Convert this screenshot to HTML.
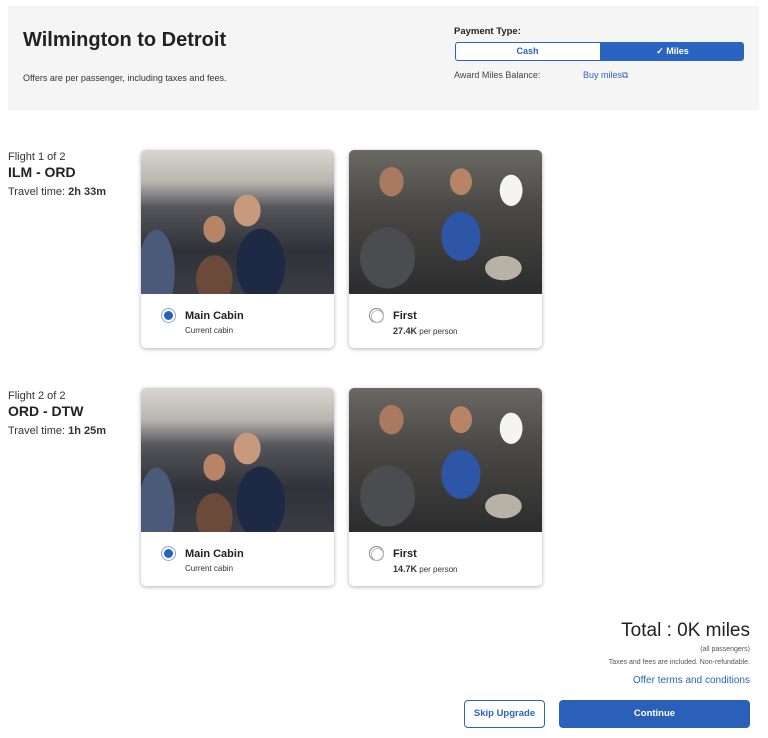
<!DOCTYPE html>
<html><head><meta charset="utf-8"><style>
*{box-sizing:border-box;margin:0;padding:0}
body{width:768px;height:738px;background:#fff;font-family:"Liberation Sans",sans-serif;color:#222;position:relative;overflow:hidden}
.hdr{position:absolute;left:8px;top:6px;width:751px;height:104px;background:#f5f5f6}
.abs{position:absolute}
.card{position:absolute;width:193px;height:198px;background:#fff;border-radius:5px;box-shadow:0 1px 4px rgba(0,0,0,.3);overflow:hidden}
.img{position:absolute;left:0;top:0;width:193px;height:144px}
.i1{background:
radial-gradient(ellipse 22px 26px at 55% 42%,#c79a7e 60%,transparent 62%),
radial-gradient(ellipse 18px 22px at 38% 55%,#b88466 60%,transparent 62%),
radial-gradient(ellipse 40px 60px at 62% 80%,#1e2a44 60%,transparent 62%),
radial-gradient(ellipse 30px 40px at 38% 90%,#6b4a3a 60%,transparent 62%),
radial-gradient(ellipse 30px 70px at 8% 85%,#4a5a78 60%,transparent 62%),
linear-gradient(#d8d6d2 0%,#b9b6b0 22%,#55555a 40%,#2f3238 70%,#3a3c44 100%)}
.i2{background:
radial-gradient(ellipse 16px 22px at 84% 28%,#f4f4f2 70%,transparent 72%),
radial-gradient(ellipse 18px 22px at 58% 22%,#b88466 60%,transparent 62%),
radial-gradient(ellipse 20px 24px at 22% 22%,#a97a60 60%,transparent 62%),
radial-gradient(ellipse 32px 40px at 58% 60%,#2d55a8 60%,transparent 62%),
radial-gradient(ellipse 45px 50px at 20% 75%,#4b4c50 60%,transparent 62%),
radial-gradient(ellipse 30px 20px at 80% 82%,#b7b1a6 60%,transparent 62%),
linear-gradient(#6a6863 0%,#4a4946 40%,#2c2c2e 100%)}
.radio{position:absolute;left:20px;top:158px;width:15px;height:15px;border-radius:50%;border:1px solid #8aa6d8}
.radio.on::after{content:"";position:absolute;left:2px;top:2px;width:9px;height:9px;border-radius:50%;background:#2663c5}
.radio.off{border:1px solid #888}
.radio.off::after{content:"";position:absolute;left:1px;top:1px;width:11px;height:11px;border-radius:50%;border:1px solid #bbb}
.ct{position:absolute;left:44px;top:160px;font-size:11px;font-weight:bold;color:#222}
.cs{position:absolute;left:44px;top:176px;font-size:8px;color:#333}
.fl{position:absolute;left:8px;font-size:11px;color:#333}
</style></head><body>
<div class="hdr"></div>
<div class="abs" style="left:23px;top:29px;font-size:20px;font-weight:bold;color:#222">Wilmington to Detroit</div>
<div class="abs" style="left:23px;top:73px;font-size:9px;color:#333">Offers are per passenger, including taxes and fees.</div>
<div class="abs" style="left:454px;top:26px;font-size:9.5px;font-weight:bold;color:#222">Payment Type:</div>
<div class="abs" style="left:455px;top:42px;width:289px;height:19px;border:1px solid #2a63c0;border-radius:3px;background:#fff;overflow:hidden">
<div class="abs" style="left:0;top:0;width:143px;height:17px;text-align:center;line-height:17px;font-size:9px;font-weight:bold;color:#2a63c0">Cash</div>
<div class="abs" style="left:144px;top:0;width:145px;height:17px;background:#2a63c0;text-align:center;line-height:17px;font-size:9px;font-weight:bold;color:#fff">✓ Miles</div></div>
<div class="abs" style="left:454px;top:70px;font-size:9px;color:#444">Award Miles Balance:</div>
<div class="abs" style="left:583px;top:70px;font-size:9px;color:#2a63c0">Buy miles⧉</div>

<div class="fl" style="top:151px">Flight 1 of 2</div>
<div class="fl" style="top:164px;font-size:14px;font-weight:bold;color:#222">ILM - ORD</div>
<div class="fl" style="top:186px">Travel time: <b>2h 33m</b></div>
<div class="card" style="left:141px;top:150px"><div class="img i1"></div><div class="radio on"></div><div class="ct">Main Cabin</div><div class="cs">Current cabin</div></div>
<div class="card" style="left:349px;top:150px"><div class="img i2"></div><div class="radio off"></div><div class="ct">First</div><div class="cs"><b style="font-size:9px">27.4K</b> per person</div></div>

<div class="fl" style="top:390px">Flight 2 of 2</div>
<div class="fl" style="top:403px;font-size:14px;font-weight:bold;color:#222">ORD - DTW</div>
<div class="fl" style="top:425px">Travel time: <b>1h 25m</b></div>
<div class="card" style="left:141px;top:388px"><div class="img i1"></div><div class="radio on"></div><div class="ct">Main Cabin</div><div class="cs">Current cabin</div></div>
<div class="card" style="left:349px;top:388px"><div class="img i2"></div><div class="radio off"></div><div class="ct">First</div><div class="cs"><b style="font-size:9px">14.7K</b> per person</div></div>

<div class="abs" style="right:18px;top:620px;font-size:19px;color:#222">Total : 0K miles</div>
<div class="abs" style="right:18px;top:646px;font-size:7px;color:#555">(all passengers)</div>
<div class="abs" style="right:18px;top:659px;font-size:7px;color:#555">Taxes and fees are included. Non-refundable.</div>
<div class="abs" style="right:18px;top:675px;font-size:10px;color:#2a63c0">Offer terms and conditions</div>
<div class="abs" style="left:464px;top:700px;width:81px;height:28px;border:1px solid #2a63c0;border-radius:4px;text-align:center;line-height:26px;font-size:9.5px;font-weight:bold;color:#2a63c0">Skip Upgrade</div>
<div class="abs" style="left:559px;top:700px;width:191px;height:28px;background:#2a5fba;border-radius:4px;text-align:center;line-height:28px;font-size:9.5px;font-weight:bold;color:#fff">Continue</div>
</body></html>
